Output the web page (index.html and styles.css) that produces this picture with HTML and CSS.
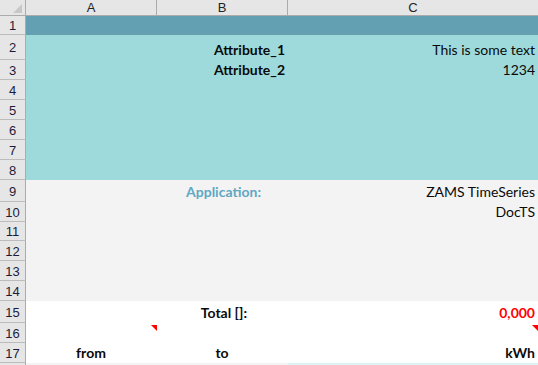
FILE: index.html
```html
<!DOCTYPE html>
<html lang="en">
<head>
    <meta charset="UTF-8">
    <title>Sheet</title>
    <link rel="stylesheet" href="styles.css">
</head>
<body>
    <div class="sheet">
        <div class="row head">
            <div class="corner"><span class="corner-mark"></span></div>
            <div class="col-head">A</div>
            <div class="col-head">B</div>
            <div class="col-head last">C</div>
        </div>

        <div class="row h19 band-dark">
            <div class="num">1</div><div class="cell"></div><div class="cell"></div><div class="cell"></div>
        </div>
        <div class="row h25 band-teal">
            <div class="num">2</div><div class="cell"></div><div class="cell right bold">Attribute_1</div><div class="cell right">This is some text</div>
        </div>
        <div class="row h20 band-teal">
            <div class="num">3</div><div class="cell"></div><div class="cell right bold">Attribute_2</div><div class="cell right">1234</div>
        </div>
        <div class="row h20 band-teal"><div class="num">4</div><div class="cell"></div><div class="cell"></div><div class="cell"></div></div>
        <div class="row h20 band-teal"><div class="num">5</div><div class="cell"></div><div class="cell"></div><div class="cell"></div></div>
        <div class="row h20 band-teal"><div class="num">6</div><div class="cell"></div><div class="cell"></div><div class="cell"></div></div>
        <div class="row h20 band-teal"><div class="num">7</div><div class="cell"></div><div class="cell"></div><div class="cell"></div></div>
        <div class="row h20 band-teal"><div class="num">8</div><div class="cell"></div><div class="cell"></div><div class="cell"></div></div>

        <div class="row h22 band-grey">
            <div class="num">9</div><div class="cell"></div><div class="cell right bold label-blue indent">Application:</div><div class="cell right">ZAMS TimeSeries</div>
        </div>
        <div class="row h20 band-grey">
            <div class="num">10</div><div class="cell"></div><div class="cell"></div><div class="cell right">DocTS</div>
        </div>
        <div class="row h19 band-grey"><div class="num">11</div><div class="cell"></div><div class="cell"></div><div class="cell"></div></div>
        <div class="row h20 band-grey"><div class="num">12</div><div class="cell"></div><div class="cell"></div><div class="cell"></div></div>
        <div class="row h20 band-grey"><div class="num">13</div><div class="cell"></div><div class="cell"></div><div class="cell"></div></div>
        <div class="row h20 band-grey"><div class="num">14</div><div class="cell"></div><div class="cell"></div><div class="cell"></div></div>

        <div class="row h22 band-white">
            <div class="num">15</div><div class="cell"></div><div class="cell right bold indent-lg">Total []:</div><div class="cell right bold total">0,000</div>
        </div>
        <div class="row h20 band-white">
            <div class="num">16</div><div class="cell note"></div><div class="cell"></div><div class="cell note"></div>
        </div>
        <div class="row h20 band-white">
            <div class="num">17</div><div class="cell center bold">from</div><div class="cell center bold">to</div><div class="cell right bold">kWh</div>
        </div>
        <div class="row h20 band-next">
            <div class="num"></div><div class="cell"></div><div class="cell"></div><div class="cell light-cyan"></div>
        </div>
    </div>
</body>
</html>
```

FILE: styles.css
```css
:root {
    --head-bg: #e6e6e6;
    --head-line: #ababab;
    --dark-band: #62a0b2;
    --teal-band: #9edadb;
    --grey-band: #f3f3f3;
    --blue-label: #5fa7c3;
}

* {
    box-sizing: border-box;
}

body {
    margin: 0;
    background: #ffffff;
    overflow: hidden;
}

.sheet {
    width: 538px;
    font-family: 'Lato', 'Liberation Sans', sans-serif;
    font-size: 14px;
    color: #0a0a0a;
}

.row {
    display: grid;
    grid-template-columns: 26px 131px 131px 250px;
}

.h19 { height: 19px; }
.h20 { height: 20px; }
.h22 { height: 22px; }
.h25 { height: 25px; }

.head {
    height: 16px;
    background: var(--head-bg);
    border-bottom: 1px solid var(--head-line);
    font-family: 'Liberation Sans', Arial, sans-serif;
    font-size: 13px;
    color: #222222;
}

.corner {
    position: relative;
    border-right: 1px solid var(--head-line);
}

.corner-mark {
    position: absolute;
    right: 3px;
    bottom: 2px;
    width: 0;
    height: 0;
    border-left: 9px solid transparent;
    border-bottom: 9px solid #c8c8c8;
}

.col-head {
    text-align: center;
    line-height: 15px;
    border-right: 1px solid var(--head-line);
}

.col-head.last {
    border-right: none;
}

.num {
    background: var(--head-bg);
    border-right: 1px solid var(--head-line);
    border-bottom: 1px solid #bcbcbc;
    font-family: 'Liberation Sans', Arial, sans-serif;
    font-size: 13px;
    color: #1c1c3a;
    display: flex;
    align-items: center;
    justify-content: center;
    padding-top: 1px;
}

.band-dark { background: var(--dark-band); }
.band-teal { background: var(--teal-band); }
.band-grey { background: var(--grey-band); }
.band-white { background: #ffffff; }
.band-next { background: var(--grey-band); }

.light-cyan {
    background: #ddf4f4;
}

.cell {
    display: flex;
    align-items: flex-end;
    padding: 0 3px 2px 2px;
    white-space: nowrap;
    line-height: 16px;
}

.right { justify-content: flex-end; }
.center { justify-content: center; }
.bold { font-weight: bold; }

.label-blue {
    color: var(--blue-label);
}

.indent { padding-right: 27px; }
.indent-lg { padding-right: 41px; }

.total {
    color: #ff0000;
}

.note {
    position: relative;
}

.note::after {
    content: "";
    position: absolute;
    top: 2px;
    right: 0;
    border-left: 6px solid transparent;
    border-top: 6px solid #ff0000;
}
```
